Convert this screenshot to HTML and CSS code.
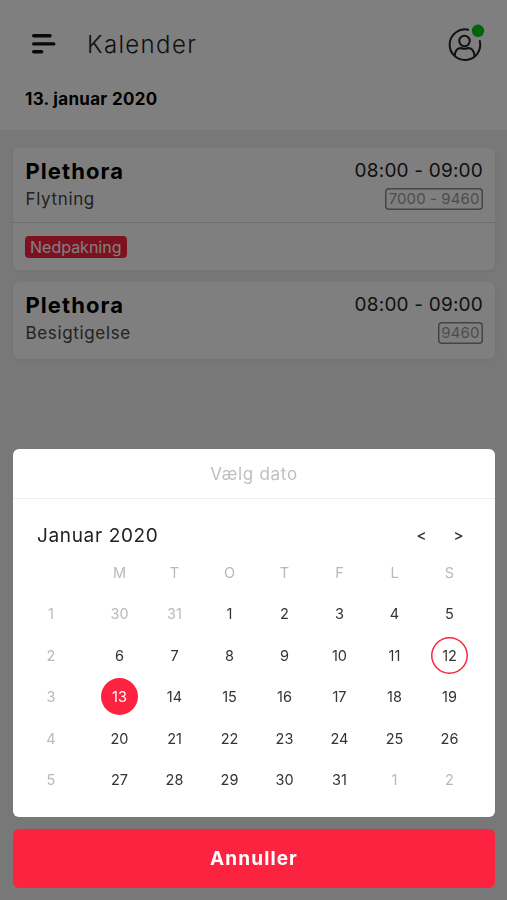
FILE: index.html
```
<!DOCTYPE html>
<html lang="da">
<head>
    <meta charset="UTF-8">
    <meta name="viewport" content="width=device-width, initial-scale=1.0">
    <title>Kalender</title>
    <link rel="stylesheet" href="styles.css">
</head>
<body>
    <header class="header">
        <div class="header-top">
            <svg class="menu-icon" width="24" height="20" viewBox="0 0 24 20">
                <path d="M1.7 1.7H18M1.7 9.9H21.8M1.7 17.8H9.7" />
            </svg>
            <h1>Kalender</h1>
            <svg class="profile-icon" width="37" height="38" viewBox="0 0 37 38">
                <path d="M20.2 5.7A15.3 15.3 0 1 0 31.8 17" />
                <circle cx="16.5" cy="17" r="5.2" />
                <path d="M6.8 31.3C7.3 26.6 9.4 24 12.9 24C15.3 25 17.8 25 20.2 24C23.7 24 25.8 26.6 26.4 31.3" />
                <circle class="status-dot" cx="30" cy="6.8" r="6.2" />
            </svg>
        </div>
        <p class="current-date">13. januar 2020</p>
    </header>

    <main class="events">
        <article class="event">
            <div class="event-main">
                <div>
                    <h2>Plethora</h2>
                    <p class="event-type">Flytning</p>
                </div>
                <div class="event-info">
                    <p class="event-time">08:00 - 09:00</p>
                    <span class="zip">7000 - 9460</span>
                </div>
            </div>
            <div class="event-tags">
                <span class="tag">Nedpakning</span>
            </div>
        </article>

        <article class="event">
            <div class="event-main">
                <div>
                    <h2>Plethora</h2>
                    <p class="event-type">Besigtigelse</p>
                </div>
                <div class="event-info">
                    <p class="event-time">08:00 - 09:00</p>
                    <span class="zip">9460</span>
                </div>
            </div>
        </article>
    </main>

    <!-- Date picker -->
    <div class="overlay">
        <section class="picker">
            <div class="picker-title"><span>Vælg dato</span></div>
            <div class="picker-nav">
                <h3>Januar 2020</h3>
                <button class="nav-btn">&lt;</button>
                <button class="nav-btn">&gt;</button>
            </div>
            <div class="weekdays">
                <span></span><span>M</span><span>T</span><span>O</span><span>T</span><span>F</span><span>L</span><span>S</span>
            </div>
            <div class="days">
                <span class="week">1</span><span class="muted">30</span><span class="muted">31</span><span>1</span><span>2</span><span>3</span><span>4</span><span>5</span>
                <span class="week">2</span><span>6</span><span>7</span><span>8</span><span>9</span><span>10</span><span>11</span><span><b class="today">12</b></span>
                <span class="week">3</span><span><b class="selected">13</b></span><span>14</span><span>15</span><span>16</span><span>17</span><span>18</span><span>19</span>
                <span class="week">4</span><span>20</span><span>21</span><span>22</span><span>23</span><span>24</span><span>25</span><span>26</span>
                <span class="week">5</span><span>27</span><span>28</span><span>29</span><span>30</span><span>31</span><span class="muted">1</span><span class="muted">2</span>
            </div>
        </section>
        <button class="cancel-btn">Annuller</button>
    </div>
</body>
</html>
```

FILE: styles.css
```
:root {
    --primary-color: #fb233f;
    --background: #f0f0f0;
    --muted: #b9b9b9;
}

* {
    box-sizing: border-box;
    margin: 0;
    padding: 0;
    font-family: Inter, "Open Sans", sans-serif;
}

body {
    height: 900px;
    overflow: hidden;
    background: var(--background);
    color: #000;
}

button {
    border: none;
    background: none;
    cursor: pointer;
}

/* Header */
.header {
    height: 130px;
    padding: 22px 22px 0 32px;
    background: white;
}

.header-top {
    display: flex;
    align-items: center;
    height: 44px;
}

.header h1 {
    flex: 1;
    margin-left: 31px;
    font-size: 24px;
    font-weight: 300;
    letter-spacing: 1.35px;
    color: #222;
}

.menu-icon,
.profile-icon {
    fill: none;
    stroke: #111;
    stroke-width: 3.4;
    stroke-linecap: round;
}

.profile-icon {
    stroke: #222;
    stroke-width: 2;
    margin-right: 0.5px;
    margin-bottom: 3px;
}

.status-dot {
    fill: #00c814;
    stroke: none;
}

.current-date {
    margin: 21px 0 0 -7px;
    font-size: 17px;
    line-height: 24px;
    font-weight: 700;
    letter-spacing: 0.3px;
}

/* Events */
.events {
    display: flex;
    flex-direction: column;
    gap: 12px;
    padding: 18px 12px 0 13px;
}

.event {
    background: white;
    border-radius: 6px;
    box-shadow: 0 1px 5px rgba(0, 0, 0, 0.05);
}

.event-main {
    display: flex;
    justify-content: space-between;
    height: 77px;
    padding: 9px 12px 0 12.5px;
}

.event:first-child .event-main {
    height: 75px;
    border-bottom: 1px solid #d8d8d8;
}

.event h2 {
    font-size: 22px;
    line-height: 28px;
    font-weight: 700;
    letter-spacing: 1.05px;
}

.event-type {
    font-size: 17px;
    line-height: 28px;
    letter-spacing: 0.65px;
    color: #444;
}

.event-info {
    display: flex;
    flex-direction: column;
    align-items: flex-end;
}

.event-time {
    font-size: 19px;
    line-height: 27px;
    letter-spacing: 0.2px;
    color: #222;
}

.zip {
    height: 22px;
    margin-top: 4px;
    padding: 0 3.5px;
    border-radius: 4px;
    box-shadow: inset 0 0 0 1.5px #888;
    font-size: 15px;
    line-height: 22px;
    letter-spacing: 0.1px;
    color: #999;
}

.event-tags {
    height: 47px;
    padding: 13px 12px;
}

.tag {
    display: inline-block;
    height: 22px;
    padding: 0 5px;
    border-radius: 4px;
    background: var(--primary-color);
    color: white;
    font-size: 16px;
    line-height: 22px;
}

/* Date picker */
.overlay {
    position: fixed;
    inset: 0;
    display: flex;
    flex-direction: column;
    justify-content: flex-end;
    gap: 12px;
    padding: 0 12px 12px 13px;
    background: rgba(0, 0, 0, 0.5);
}

.picker {
    height: 368px;
    border-radius: 6px;
    background: white;
}

.picker-title {
    height: 50px;
    border-bottom: 1px solid #eee;
    color: #bfbfbf;
    font-size: 17px;
    line-height: 50px;
    letter-spacing: 0.7px;
    text-align: center;
}

.picker-nav {
    display: flex;
    align-items: center;
    height: 48px;
    margin-top: 12px;
    padding: 0 18px 0 24px;
}

.picker-nav h3 {
    flex: 1;
    font-size: 19px;
    font-weight: 400;
    letter-spacing: 0.65px;
    color: #222;
}

.nav-btn {
    width: 37px;
    font-size: 15px;
    font-weight: 500;
    color: #333;
}

.weekdays,
.days {
    display: grid;
    grid-template-columns: 79px repeat(7, 1fr);
    padding-right: 18px;
    text-align: center;
    font-size: 14.5px;
    color: #333;
}

.weekdays {
    line-height: 27px;
    color: var(--muted);
}

.days {
    grid-auto-rows: 41.5px;
    margin-top: 7px;
    line-height: 41.5px;
}

.days span {
    display: flex;
    align-items: center;
    justify-content: center;
}

.days .week {
    padding-right: 3px;
    color: var(--muted);
}

.days .muted {
    color: var(--muted);
}

.today,
.selected {
    width: 37px;
    height: 37px;
    border-radius: 50%;
    font-weight: 400;
    line-height: 37px;
}

.today {
    box-shadow: inset 0 0 0 1.5px var(--primary-color);
}

.selected {
    background: var(--primary-color);
    color: white;
}

.cancel-btn {
    height: 59px;
    border-radius: 6px;
    background: var(--primary-color);
    color: white;
    font-size: 19px;
    font-weight: 700;
    letter-spacing: 1.1px;
}
```
